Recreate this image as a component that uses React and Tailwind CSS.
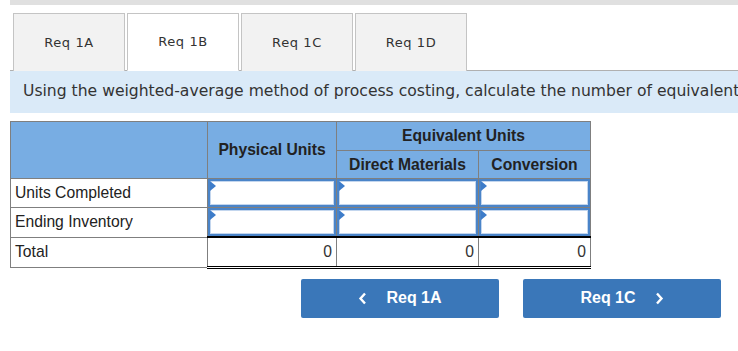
import React from "react";

function InputCell() {
  return (
    <td className="p-0 border border-[#7f7f7f] bg-white">
      <div className="relative h-[28px] border-2 border-[#4a84c8] bg-white">
        <div className="absolute inset-0 border border-[#c3d6ee]"></div>
        <div className="absolute left-0 top-0 w-0 h-0 border-t-[5px] border-b-[5px] border-l-[6px] border-t-transparent border-b-transparent border-l-[#3d7cc9]"></div>
      </div>
    </td>
  );
}

function TotalCell() {
  return (
    <td className="border-x border-[#7f7f7f] border-t-2 border-t-black border-b-[3px] border-b-black border-double text-right pr-[4px] text-[#333]">0</td>
  );
}

export default function App() {
  const tabs = ["Req 1A", "Req 1B", "Req 1C", "Req 1D"];
  return (
    <div className="w-[738px] h-[351px] bg-white overflow-hidden relative">
      <div className="ml-[10px] h-[5px] bg-[#e0e0e0]"></div>
      <div className="ml-[10px] mt-[8px] flex gap-[2px] pl-[3px] border-b border-[#b0b0b0] h-[58px]">
        {tabs.map((t, i) => (
          <div
            key={t}
            className={
              "w-[112px] h-[58px] flex items-center justify-center border border-[#c4c4c4] text-[13px] tracking-[0.6px] text-[#333] " +
              (i === 1 ? "bg-white border-b-white" : "bg-[#f2f2f2] border-b-0")
            }
            style={{ fontFamily: '"DejaVu Sans", Verdana, sans-serif' }}
          >
            {t}
          </div>
        ))}
      </div>
      <div
        className="ml-[10px] h-[42px] bg-[#daeaf8] flex items-center pl-[13px] whitespace-nowrap overflow-hidden text-[15.6px] text-[#333]"
        style={{ fontFamily: '"DejaVu Sans", Verdana, sans-serif' }}
      >
        Using the weighted-average method of process costing, calculate the number of equivalent
      </div>
      <div className="ml-[10px] mt-[8px]" style={{ fontFamily: '"Liberation Sans", Arial, sans-serif' }}>
        <table className="border-collapse w-[580px] text-[15.7px] text-[#222] table-fixed">
          <colgroup>
            <col className="w-[197px]" />
            <col className="w-[129px]" />
            <col className="w-[142px]" />
            <col className="w-[112px]" />
          </colgroup>
          <thead>
            <tr className="h-[29px]">
              <th rowSpan={2} className="bg-[#78ade3] border border-[#7f7f7f]"></th>
              <th rowSpan={2} className="bg-[#78ade3] border border-[#7f7f7f] font-bold text-center">Physical Units</th>
              <th colSpan={2} className="bg-[#78ade3] border border-[#7f7f7f] font-bold text-center">Equivalent Units</th>
            </tr>
            <tr className="h-[28px]">
              <th className="bg-[#78ade3] border border-[#7f7f7f] font-bold text-center">Direct Materials</th>
              <th className="bg-[#78ade3] border border-[#7f7f7f] font-bold text-center">Conversion</th>
            </tr>
          </thead>
          <tbody>
            <tr>
              <td className="border border-[#7f7f7f] px-[4px] h-[28px] font-normal">Units Completed</td>
              <InputCell />
              <InputCell />
              <InputCell />
            </tr>
            <tr>
              <td className="border border-[#7f7f7f] px-[4px] h-[28px]">Ending Inventory</td>
              <InputCell />
              <InputCell />
              <InputCell />
            </tr>
            <tr>
              <td className="border border-[#7f7f7f] px-[4px] h-[30px]">Total</td>
              <TotalCell />
              <TotalCell />
              <TotalCell />
            </tr>
          </tbody>
        </table>
      </div>
      <div className="flex gap-[24px] ml-[301px] mt-[10px]" style={{ fontFamily: '"Liberation Sans", Arial, sans-serif' }}>
        <div className="w-[198px] h-[39px] rounded-[2px] bg-[#3a77b9] flex items-center justify-center text-white font-bold text-[16px] gap-[19px]">
          <svg width="9" height="13" viewBox="0 0 9 13"><path d="M7 1.5 L2.5 6.5 L7 11.5" stroke="white" strokeWidth="2.4" fill="none" /></svg>
          <span>Req 1A</span>
        </div>
        <div className="w-[198px] h-[39px] rounded-[2px] bg-[#3a77b9] flex items-center justify-center text-white font-bold text-[16px] gap-[19px]">
          <span>Req 1C</span>
          <svg width="9" height="13" viewBox="0 0 9 13"><path d="M2 1.5 L6.5 6.5 L2 11.5" stroke="white" strokeWidth="2.4" fill="none" /></svg>
        </div>
      </div>
    </div>
  );
}
